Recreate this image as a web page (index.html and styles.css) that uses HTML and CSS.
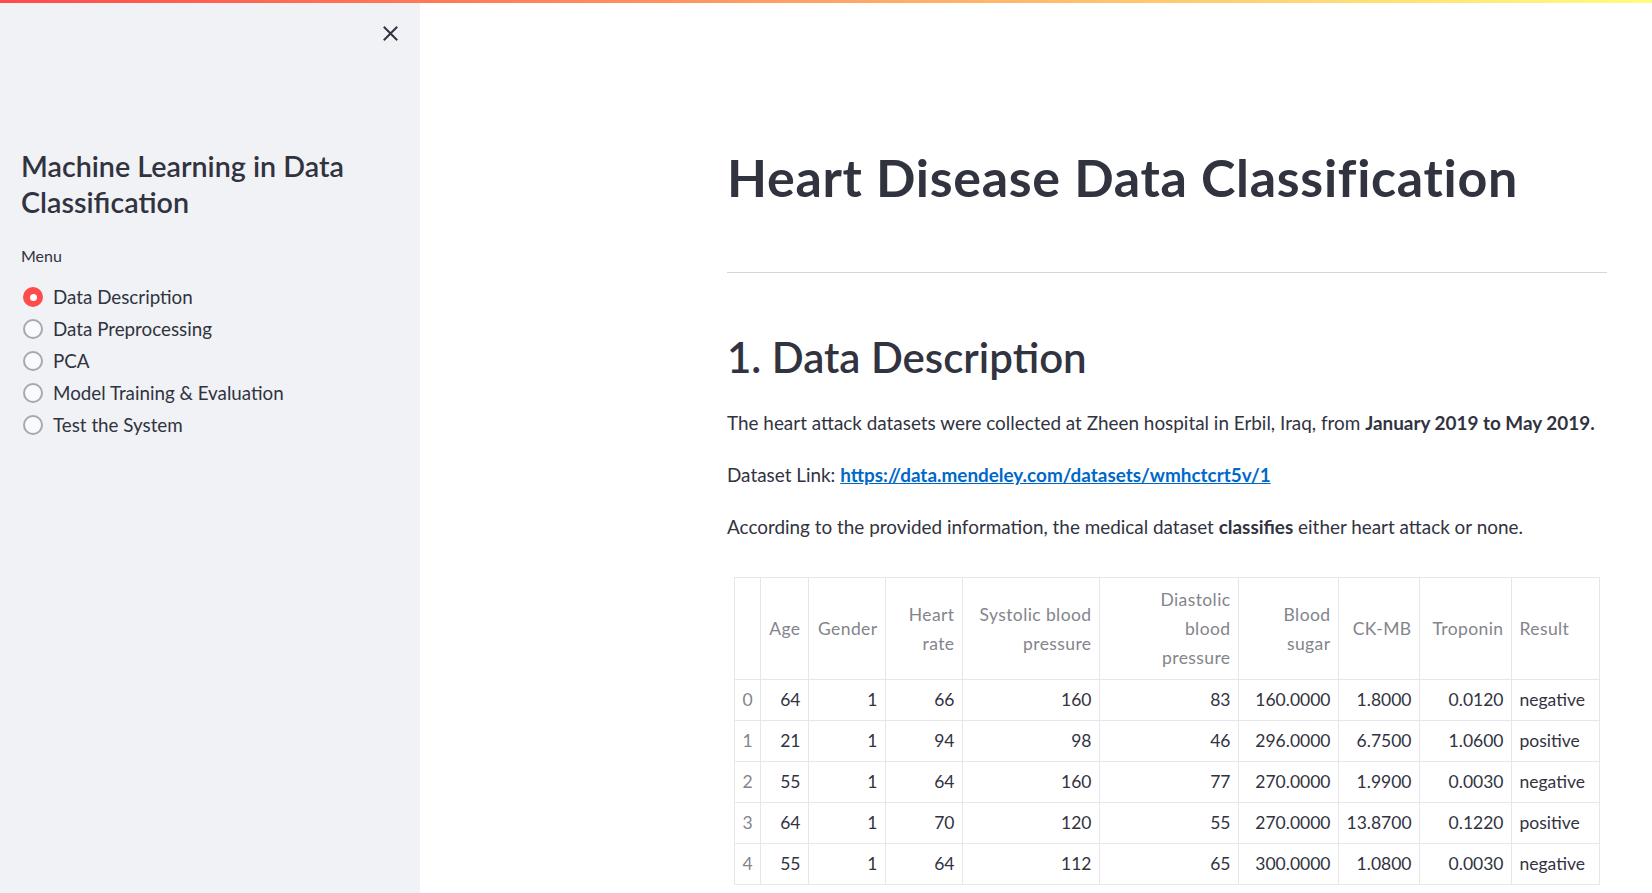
FILE: index.html
```html
<!DOCTYPE html>
<html lang="en">
<head>
<meta charset="utf-8">
<title>Heart Disease Data Classification</title>
<link rel="stylesheet" href="styles.css">
</head>
<body>
<div class="decoration"></div>
<div class="app">
  <aside class="sidebar">
    <div class="sidebar-top">
      <button class="close-btn" aria-label="Close sidebar">
        <svg width="15" height="15" viewBox="0 0 15 15"><path d="M1.5 1.5 L13.5 13.5 M13.5 1.5 L1.5 13.5" stroke="#31333f" stroke-width="2" stroke-linecap="square" fill="none"/></svg>
      </button>
    </div>
    <h1 class="side-title">Machine Learning in Data Classification</h1>
    <div class="menu-label">Menu</div>
    <ul class="radio-list">
      <li class="radio-item selected"><span class="radio-dot"></span><span>Data Description</span></li>
      <li class="radio-item"><span class="radio-dot"></span><span>Data Preprocessing</span></li>
      <li class="radio-item"><span class="radio-dot"></span><span>PCA</span></li>
      <li class="radio-item"><span class="radio-dot"></span><span>Model Training &amp; Evaluation</span></li>
      <li class="radio-item"><span class="radio-dot"></span><span>Test the System</span></li>
    </ul>
  </aside>
  <main class="main">
    <div class="block">
      <h1 class="title">Heart Disease Data Classification</h1>
      <hr class="divider">
      <h2 class="section">1. Data Description</h2>
      <p class="text">The heart attack datasets were collected at Zheen hospital in Erbil, Iraq, from <strong>January 2019 to May 2019.</strong></p>
      <p class="text">Dataset Link: <a class="link" href="#">https://data.mendeley.com/datasets/wmhctcrt5v/1</a></p>
      <p class="text">According to the provided information, the medical dataset <strong>classifies</strong> either heart attack or none.</p>
      <table class="df">
        <colgroup>
          <col class="w-idx"><col class="w-age"><col class="w-gender"><col class="w-hr"><col class="w-sys"><col class="w-dia"><col class="w-sugar"><col class="w-ck"><col class="w-trop"><col class="w-res">
        </colgroup>
        <thead>
          <tr>
            <th class="blank"></th>
            <th>Age</th>
            <th>Gender</th>
            <th>Heart<br>rate</th>
            <th>Systolic blood<br>pressure</th>
            <th>Diastolic<br>blood<br>pressure</th>
            <th>Blood<br>sugar</th>
            <th>CK-MB</th>
            <th>Troponin</th>
            <th class="txt">Result</th>
          </tr>
        </thead>
        <tbody>
          <tr><th class="idx">0</th><td>64</td><td>1</td><td>66</td><td>160</td><td>83</td><td>160.0000</td><td>1.8000</td><td>0.0120</td><td class="txt">negative</td></tr>
          <tr><th class="idx">1</th><td>21</td><td>1</td><td>94</td><td>98</td><td>46</td><td>296.0000</td><td>6.7500</td><td>1.0600</td><td class="txt">positive</td></tr>
          <tr><th class="idx">2</th><td>55</td><td>1</td><td>64</td><td>160</td><td>77</td><td>270.0000</td><td>1.9900</td><td>0.0030</td><td class="txt">negative</td></tr>
          <tr><th class="idx">3</th><td>64</td><td>1</td><td>70</td><td>120</td><td>55</td><td>270.0000</td><td>13.8700</td><td>0.1220</td><td class="txt">positive</td></tr>
          <tr><th class="idx">4</th><td>55</td><td>1</td><td>64</td><td>112</td><td>65</td><td>300.0000</td><td>1.0800</td><td>0.0030</td><td class="txt">negative</td></tr>
        </tbody>
      </table>
    </div>
  </main>
</div>
</body>
</html>
```
FILE: styles.css
```css
* { box-sizing: border-box; }
html, body {
  margin: 0;
  padding: 0;
  height: 100%;
  overflow: hidden;
  background: #ffffff;
  font-family: "Lato", "Noto Sans", sans-serif;
  color: #31333f;
}
.decoration {
  height: 3px;
  background: linear-gradient(90deg, #ff4b4b, #fffd80);
}
.app {
  display: flex;
  height: calc(100% - 3px);
}
.sidebar {
  width: 420px;
  flex: 0 0 420px;
  background: #f0f2f6;
  padding: 0 21px;
}
.sidebar-top {
  display: flex;
  justify-content: flex-end;
  padding-top: 23px;
  height: 38px;
}
.close-btn {
  border: 0;
  background: transparent;
  padding: 0;
  margin-right: 1px;
  width: 15px;
  height: 15px;
  display: block;
}
.close-btn svg { display: block; }
.side-title {
  margin: 107px 0 0 0;
  font-size: 28.7px;
  line-height: 36px;
  font-weight: 600;
  color: #31333f;
}
.menu-label {
  margin-top: 24px;
  font-size: 16px;
  line-height: 24px;
}
.radio-list {
  list-style: none;
  margin: 13px 0 0 0;
  padding: 0;
}
.radio-item {
  display: flex;
  align-items: center;
  height: 32px;
  font-size: 18.8px;
  line-height: 32px;
}
.radio-dot {
  width: 20px;
  height: 20px;
  border-radius: 50%;
  margin-left: 2px;
  margin-right: 10px;
  border: 2.5px solid #a5a8b1;
  background: #f9fafb;
  flex: 0 0 20px;
  display: flex;
  align-items: center;
  justify-content: center;
}
.radio-item.selected .radio-dot {
  border: 0;
  background: #ff4b4b;
}
.radio-item.selected .radio-dot::after {
  content: "";
  width: 7px;
  height: 7px;
  border-radius: 50%;
  background: #ffffff;
}
.main {
  flex: 1;
  background: #ffffff;
  padding: 141px 0 0 307px;
}
.block {
  width: 880px;
}
.title {
  margin: 0;
  font-size: 52px;
  line-height: 66px;
  font-weight: 700;
  letter-spacing: 0.7px;
}
.divider {
  margin: 62px 0 0 0;
  border: 0;
  height: 1px;
  background: #d6d6d9;
}
.section {
  margin: 57px 0 0 0;
  font-size: 42px;
  line-height: 54px;
  font-weight: 600;
}
.text {
  margin: 0 0 20px 0;
  font-size: 18.9px;
  line-height: 32px;
}
.section + .text { margin-top: 23px; }
.text strong { font-weight: 700; }
.link {
  color: #0068c9;
  text-decoration: underline;
  font-weight: 700;
}
.df {
  margin: 34px 0 0 7px;
  border-collapse: collapse;
  table-layout: fixed;
  width: 865px;
  font-size: 17.5px;
  line-height: 29px;
}
.df th, .df td {
  border: 1px solid #e6e7ea;
  padding: 5px 7.5px 6px 7.5px;
  text-align: right;
  font-weight: 400;
  white-space: nowrap;
  overflow: hidden;
}
.df thead th {
  color: #83858c;
  vertical-align: middle;
  padding: 7px 7.5px;
  letter-spacing: 0.4px;
}
.df td { color: #31333f; }
.df .idx {
  color: #83858c;
  text-align: left;
}
.df .txt { text-align: left; }
.w-idx { width: 26px; }
.w-age { width: 48px; }
.w-gender { width: 77px; }
.w-hr { width: 77px; }
.w-sys { width: 137px; }
.w-dia { width: 139px; }
.w-sugar { width: 100px; }
.w-ck { width: 81px; }
.w-trop { width: 92px; }
.w-res { width: 88px; }
```
